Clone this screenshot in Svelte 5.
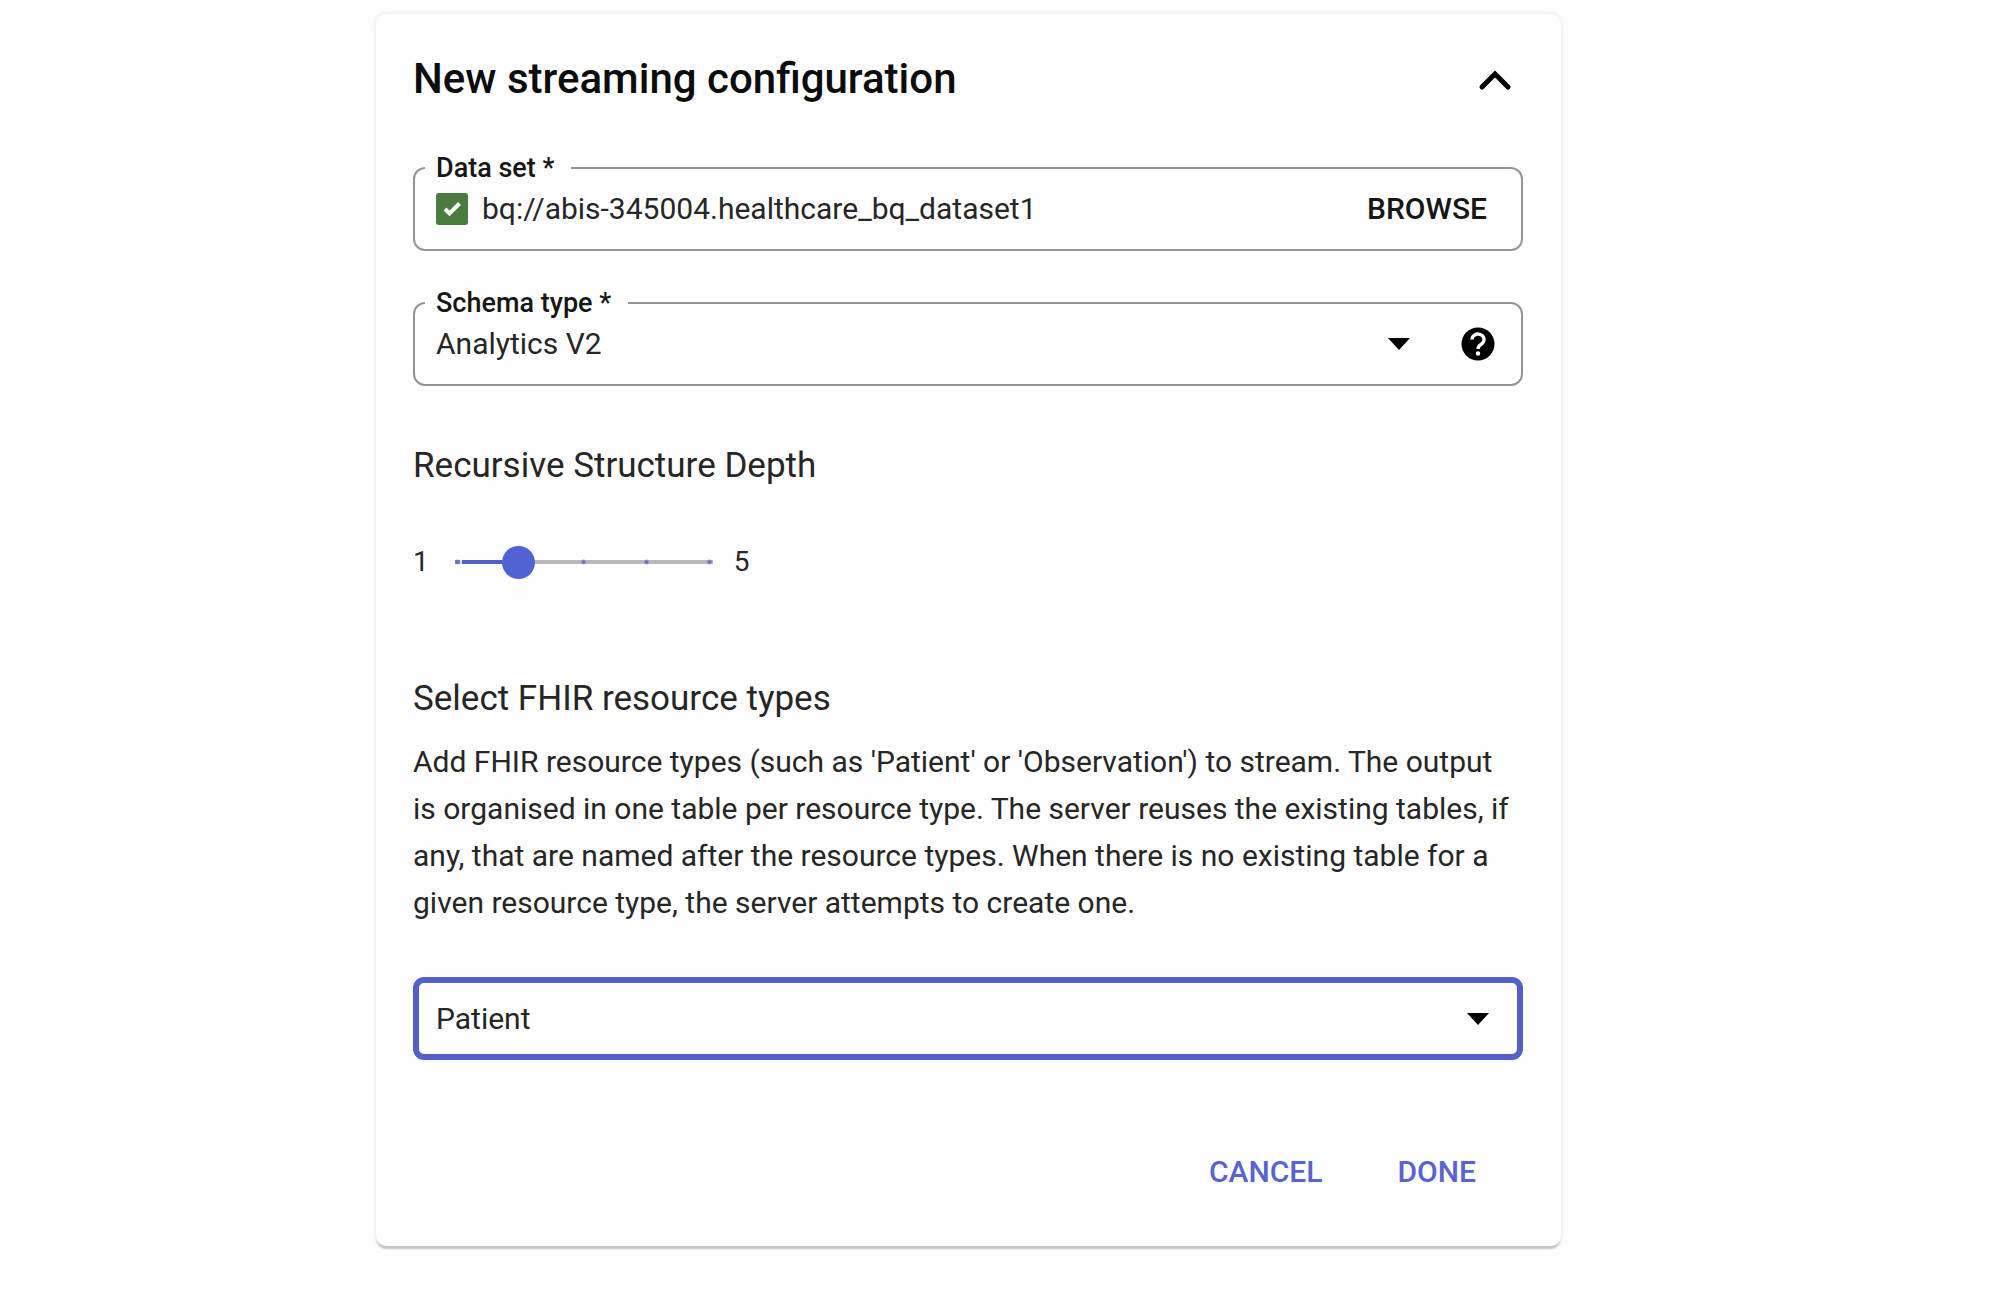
<script>
  let open = $state(true);
  let dataset = $state('bq://abis-345004.healthcare_bq_dataset1');
  let schema = $state('Analytics V2');
  let depth = $state(2);
  let resource = $state('Patient');
</script>

<main class="page">
  <form class="card" onsubmit={(e) => e.preventDefault()}>
    <header class="head">
      <h1>New streaming configuration</h1>
      <button type="button" class="toggle" aria-label="Collapse section" aria-expanded={open} onclick={() => (open = !open)}>
        <svg width="36" height="24" viewBox="0 0 36 24" aria-hidden="true">
          <path d="M5 20 18 7l13 13" fill="none" stroke="#000" stroke-width="5" stroke-linecap="round" />
        </svg>
      </button>
    </header>

    {#if open}
      <fieldset class="field">
        <legend><label for="dataset">Data set *</label></legend>
        <div class="row">
          <svg class="check" width="32" height="32" viewBox="0 0 32 32" aria-hidden="true">
            <rect width="32" height="32" rx="3" fill="#4a7c3f" />
            <path d="M9 16l4.500 4.500L23.500 10.500" fill="none" stroke="#fff" stroke-width="4" />
          </svg>
          <input id="dataset" type="text" bind:value={dataset} />
          <button type="button" class="browse">BROWSE</button>
        </div>
      </fieldset>

      <fieldset class="field">
        <legend><label for="schema">Schema type *</label></legend>
        <div class="row">
          <select id="schema" bind:value={schema}>
            <option>Analytics V2</option>
            <option>Analytics</option>
          </select>
          <svg class="arrow" width="22" height="12" viewBox="0 0 22 12" aria-hidden="true"><path d="M0 0h22L11 12z" /></svg>
          <button type="button" class="help" aria-label="Help">
            <svg width="34" height="34" viewBox="0 0 34 34" aria-hidden="true">
              <circle cx="17" cy="17" r="16.500" />
              <path d="M11 12.500a6 5.500 0 1 1 10.200 4c-2.200 1.900-4.200 2.500-4.200 5.500" fill="none" stroke="#fff" stroke-width="3.400" />
              <circle cx="17" cy="26.500" r="2.200" fill="#fff" />
            </svg>
          </button>
        </div>
      </fieldset>

      <h2 class="depth-title" id="depth-title">Recursive Structure Depth</h2>
      <div class="slider">
        <span>1</span>
        <input type="range" min="1" max="5" step="1" aria-labelledby="depth-title" bind:value={depth} />
        <span>5</span>
      </div>

      <h2><label for="resource">Select FHIR resource types</label></h2>
      <p>
        Add FHIR resource types (such as 'Patient' or 'Observation') to stream. The output is organised in one table
        per resource type. The server reuses the existing tables, if any, that are named after the resource types.
        When there is no existing table for a given resource type, the server attempts to create one.
      </p>

      <div class="picker">
        <select id="resource" bind:value={resource}>
          <option>Patient</option>
          <option>Observation</option>
        </select>
        <svg class="arrow" width="22" height="12" viewBox="0 0 22 12" aria-hidden="true"><path d="M0 0h22L11 12z" /></svg>
      </div>

      <footer class="actions">
        <button type="button">CANCEL</button>
        <button type="submit">DONE</button>
      </footer>
    {/if}
  </form>
</main>

<style>
  :global(body) {
    background: #fefefe;
    color: #262626;
    font-family: Roboto, 'Liberation Sans', sans-serif;
  }
  .page {
    display: grid;
    grid-template-columns: 376fr 1185fr 439fr;
    padding: 14px 0 45px;
  }
  .card {
    grid-column: 2;
    box-sizing: border-box;
    min-width: 0;
    padding: 40px 38px 54px 37px;
    border-radius: 10px;
    background: #fefefe;
    box-shadow: 0 4px 2px -1px #c4c4c4, 0 0 4px 1px #ececec;
  }
  button {
    padding: 0;
    border: 0;
    background: none;
    font: inherit;
    cursor: pointer;
  }
  svg {
    display: block;
    flex: none;
  }
  .head {
    display: flex;
    align-items: center;
    justify-content: space-between;
    padding-right: 10px;
    margin-bottom: 49px;
  }
  h1 {
    margin: 0;
    color: #0c0c0c;
    font-size: 42px;
    font-weight: 500;
    line-height: 50px;
  }
  .field {
    min-width: 0;
    margin: 0 0 37px;
    padding: 0;
    border: 2px solid #959595;
    border-radius: 12px;
  }
  legend {
    margin-left: 10px;
    padding: 0 17px 0 11px;
    color: #161616;
    font-size: 27px;
    font-weight: 500;
    line-height: 30px;
  }
  .row {
    display: flex;
    align-items: center;
    height: 52px;
    padding: 0 34px 14px 21px;
  }
  .check {
    margin-right: 14px;
  }
  input[type='text'],
  select {
    flex: 1;
    min-width: 0;
    padding: 0;
    border: 0;
    outline: 0;
    appearance: none;
    background: none;
    color: inherit;
    font: inherit;
    font-size: 30px;
    line-height: 40px;
  }
  .browse {
    color: #161616;
    font-size: 30px;
    font-weight: 500;
    line-height: 40px;
  }
  .help {
    margin: 0 -8px 0 51px;
  }
  h2 {
    margin: 0;
    font-size: 35px;
    font-weight: 400;
    line-height: 40px;
  }
  .depth-title {
    margin-top: 60px;
  }
  .slider {
    display: flex;
    align-items: center;
    gap: 10px;
    margin: 56px 0 97px;
    font-size: 28px;
    line-height: 40px;
  }
  input[type='range'] {
    width: 285px;
    height: 34px;
    margin: 0;
    appearance: none;
    background:
      radial-gradient(circle, #6a72b8 1px, transparent 3px) 97px 50% / 63px 8px repeat-x content-box,
      linear-gradient(90deg, #7c83bd 5px, #dcdff2 5px 7px, #5360cc 7px 64px, #b9b9bd 64px) 50% 50% / 100% 4px no-repeat content-box;
    box-sizing: border-box;
    padding: 0 11px 0 16px;
  }
  input[type='range']::-webkit-slider-runnable-track {
    margin: 0 -11px 0 -16px;
  }
  input[type='range']::-webkit-slider-thumb {
    width: 33px;
    height: 33px;
    border: 0;
    border-radius: 50%;
    appearance: none;
    background: #5163d2;
  }
  p {
    margin: 19px 0 51px;
    padding-right: 8px;
    font-size: 30px;
    line-height: 47px;
  }
  .picker {
    display: flex;
    align-items: center;
    box-sizing: border-box;
    height: 83px;
    padding: 0 28px 0 17px;
    border: 6px solid #545fc8;
    border-radius: 11px;
  }
  .actions {
    display: flex;
    justify-content: flex-end;
    gap: 75px;
    margin-top: 92px;
    padding-right: 47px;
  }
  .actions button {
    color: #5a62cf;
    font-size: 30px;
    font-weight: 500;
    line-height: 40px;
  }
</style>
